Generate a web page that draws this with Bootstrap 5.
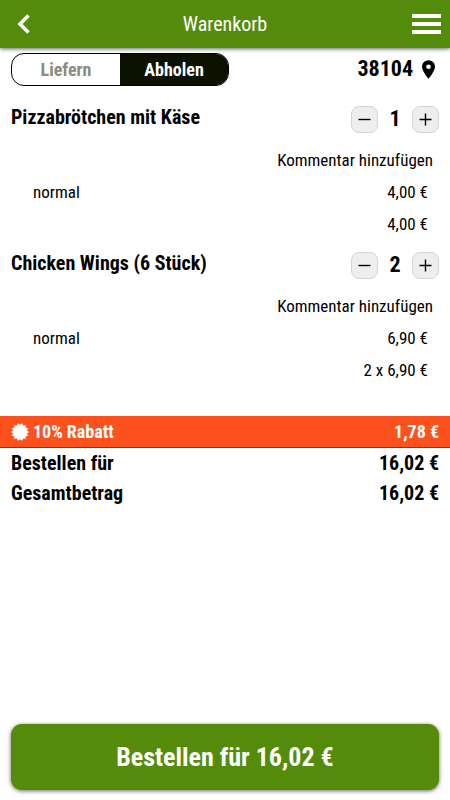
<!DOCTYPE html>
<html lang="de">
<head>
<meta charset="utf-8">
<meta name="viewport" content="width=device-width, initial-scale=1">
<title>Warenkorb</title>
<link href="https://cdn.jsdelivr.net/npm/bootstrap@5.3.0/dist/css/bootstrap.min.css" rel="stylesheet">
<style>
body { font-family: "Roboto Condensed", "Liberation Sans Narrow", Roboto, sans-serif; font-size: 18px; line-height: 32px; color: #000; background: #fff; }
.topbar { height: 48px; background: #558b0b; box-shadow: 0 1px 4px rgba(0,0,0,.6); }
.topbar h1 { font-size: 20px; line-height: 48px; }
.topbar .btn { width: 48px; height: 48px; }
.gutter { padding-left: 11px; padding-right: 11px; }
.options { padding-top: 5px; height: 54px; }
.mode { width: 218px; height: 33px; border: 1px solid #000; border-radius: 13px; overflow: hidden; }
.mode label { line-height: 31px; font-weight: 700; color: #8b8b80; cursor: pointer; }
.mode .btn-check:checked + label { background: #0b1200; color: #fff; }
.place { font-size: 22px; line-height: 32px; gap: 9px; margin-right: 4px; }
.item { padding-bottom: 8px; }
.item-head { height: 34px; margin-bottom: 8px; }
.item-head h2, .sum { font-size: 20px; line-height: 30px; font-weight: 700; }
.step { width: 27px; height: 27px; border: 1px solid #d5d5d5; border-radius: 8px; background: #eee; }
.count { width: 34px; font-size: 22px; }
.note, .line { font-size: 17px; }
.note { padding-right: 6px; }
.line { padding-left: 22px; padding-right: 11px; }
.discount { height: 32px; margin-top: 22px; background: #fe521e; border-bottom: 1px solid #f00; }
.order { height: 66px; border-radius: 11px; background: #558b0b; font-size: 26px; box-shadow: 0 1px 4px rgba(0,0,0,.6); }
.order:hover { background: #4b7b09; }
.dock { padding-bottom: 10px; }
</style>
</head>
<body class="d-flex flex-column min-vh-100">
<header class="topbar d-flex align-items-center justify-content-between text-white">
  <button type="button" class="btn p-0 border-0 rounded-0 d-flex align-items-center justify-content-center" aria-label="Zurück">
    <svg width="48" height="48" fill="none" stroke="#fff" stroke-width="3.500"><path d="M28.500 15.500 20 24l8.500 8.500"/></svg>
  </button>
  <h1 class="m-0 fw-normal">Warenkorb</h1>
  <button type="button" class="btn p-0 border-0 rounded-0 d-flex align-items-center justify-content-center" aria-label="Menü">
    <svg width="48" height="48" fill="#fff"><path d="M10 14h29v4H10zM10 22h29v4H10zM10 30h29v4H10z"/></svg>
  </button>
</header>
<main class="flex-grow-1">
  <div class="options gutter d-flex justify-content-between align-items-start">
    <div class="mode d-flex" role="group" aria-label="Bestellart">
      <input class="btn-check" type="radio" name="mode" id="liefern"><label class="w-50 text-center" for="liefern">Liefern</label>
      <input class="btn-check" type="radio" name="mode" id="abholen" checked><label class="w-50 text-center" for="abholen">Abholen</label>
    </div>
    <div class="place d-flex align-items-center fw-bold">38104
      <svg width="13" height="19" viewBox="0 0 14 20" aria-hidden="true"><path fill-rule="evenodd" d="M7 0a7 7 0 0 0-7 7c0 5 7 13 7 13s7-8 7-13a7 7 0 0 0-7-7zm0 4.500a2.500 2.500 0 1 1 0 5 2.500 2.500 0 0 1 0-5z"/></svg>
    </div>
  </div>
  <section class="item gutter">
    <div class="item-head d-flex justify-content-between">
      <h2 class="m-0">Pizzabrötchen mit Käse</h2>
      <div class="d-flex align-items-center">
        <button type="button" class="step p-0 d-flex align-items-center justify-content-center" aria-label="Weniger"><svg width="13" height="13" fill="none" stroke="#000" stroke-width="1.400"><path d="M.5 6.500h12"/></svg></button>
        <span class="count fw-bold text-center">1</span>
        <button type="button" class="step p-0 d-flex align-items-center justify-content-center" aria-label="Mehr"><svg width="13" height="13" fill="none" stroke="#000" stroke-width="1.400"><path d="M.5 6.500h12M6.500.5v12"/></svg></button>
      </div>
    </div>
    <div class="note text-end"><a href="#" class="text-black text-decoration-none">Kommentar hinzufügen</a></div>
    <div class="line d-flex justify-content-between"><span>normal</span><span>4,00 €</span></div>
    <div class="line text-end">4,00 €</div>
  </section>
  <section class="item gutter">
    <div class="item-head d-flex justify-content-between">
      <h2 class="m-0">Chicken Wings (6 Stück)</h2>
      <div class="d-flex align-items-center">
        <button type="button" class="step p-0 d-flex align-items-center justify-content-center" aria-label="Weniger"><svg width="13" height="13" fill="none" stroke="#000" stroke-width="1.400"><path d="M.5 6.500h12"/></svg></button>
        <span class="count fw-bold text-center">2</span>
        <button type="button" class="step p-0 d-flex align-items-center justify-content-center" aria-label="Mehr"><svg width="13" height="13" fill="none" stroke="#000" stroke-width="1.400"><path d="M.5 6.500h12M6.500.5v12"/></svg></button>
      </div>
    </div>
    <div class="note text-end"><a href="#" class="text-black text-decoration-none">Kommentar hinzufügen</a></div>
    <div class="line d-flex justify-content-between"><span>normal</span><span>6,90 €</span></div>
    <div class="line text-end">2 x 6,90 €</div>
  </section>
  <div class="discount gutter d-flex justify-content-between text-white fw-bold">
    <span class="d-flex align-items-center"><svg class="me-1" width="18" height="18" viewBox="-9 -9 18 18" fill="#fff" aria-hidden="true"><path id="seal" d=""/></svg>10% Rabatt</span>
    <span>1,78 €</span>
  </div>
  <div class="sum gutter d-flex justify-content-between"><span>Bestellen für</span><span>16,02 €</span></div>
  <div class="sum gutter d-flex justify-content-between"><span>Gesamtbetrag</span><span>16,02 €</span></div>
</main>
<footer class="dock gutter">
  <button type="button" class="order btn w-100 p-0 border-0 text-white fw-bold">Bestellen für 16,02 €</button>
</footer>
<script src="https://cdn.jsdelivr.net/npm/bootstrap@5.3.0/dist/js/bootstrap.bundle.min.js"></script>
<script>
// Fourteen-toothed discount seal
let points = [];
for (let i = 0; i < 28; i++) {
  const r = i % 2 ? 7.2 : 8.9, a = (i + 1) * Math.PI / 14;
  points.push((r * Math.sin(a)).toFixed(2) + ' ' + (-r * Math.cos(a)).toFixed(2));
}
document.getElementById('seal').setAttribute('d', 'M' + points.join('L') + 'Z');
</script>
</body>
</html>
